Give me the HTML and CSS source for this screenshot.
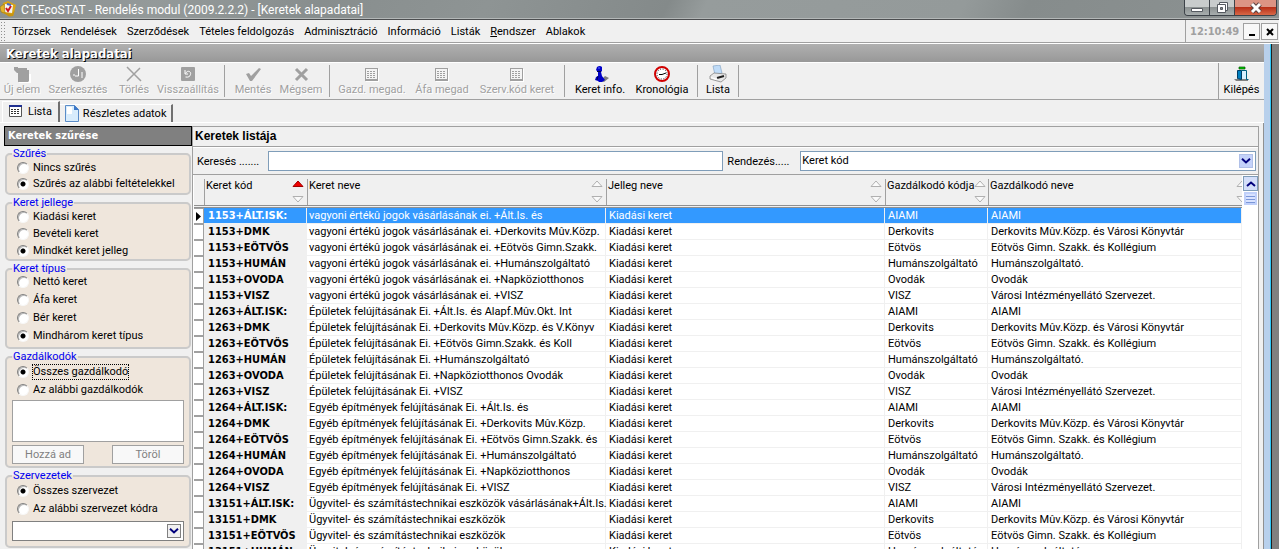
FILE: index.html
```html
<!DOCTYPE html>
<html lang="hu">
<head>
<meta charset="utf-8">
<title>CT-EcoSTAT - Rendelés modul</title>
<link rel="stylesheet" href="styles.css">
</head>
<body>
<svg class="defs" aria-hidden="true">
  <symbol id="up" viewBox="0 0 12 7"><path d="M1 6.500 6 1l5 5.500z"/></symbol>
  <symbol id="down" viewBox="0 0 12 7"><path d="M1 .5h10L6 6z"/></symbol>
  <symbol id="sheet" viewBox="0 0 16 16"><path fill="#fff" d="M2 3h13v13H2z"/><path fill="#a0a0a0" d="M1 2h13v13H1z"/><path fill="#f4f4f4" d="M2 3h11v10H2z"/><path stroke="#a0a0a0" stroke-dasharray="2 1" d="M3 5.500h9M3 7.500h9M3 9.500h9M3 11.500h9"/></symbol>
  <symbol id="chev" viewBox="0 0 10 6"><path fill="none" stroke="#00007c" stroke-width="2" d="M1 .8 5 4.500 9 .8"/></symbol>
</svg>

<header class="titlebar">
  <svg class="app-icon" width="17" height="17" viewBox="0 0 17 17"><path fill="#d9a514" d="M3 3 8 1l8 4-3 11-11-3z"/><path fill="#f6f6f0" d="m5 4 8 1-1 8-8-1z"/><path fill="#e5b52b" stroke="#8a6a10" stroke-width=".5" d="m0 7 4-3 1 9-4-1z"/><path fill="#c89410" d="m2 12 10 2 3-4-2 6-4 .5z"/><path fill="none" stroke="#cc1420" stroke-width="2" d="m6 8 2 3 3-5"/><path stroke="#4866c8" stroke-width="2" d="m7 4 4 1"/></svg>
  <h1>CT-EcoSTAT - Rendelés modul (2009.2.2.2) - [Keretek alapadatai]</h1>
  <div class="win-buttons">
    <button class="win-btn" aria-label="Kis méret"><svg width="14" height="10" viewBox="0 0 14 10"><path fill="#fff" stroke="#555a60" d="M1.500 5.500h11v3h-11z"/></svg></button>
    <button class="win-btn" aria-label="Előző méret"><svg width="13" height="12" viewBox="0 0 13 12"><path fill="#fff" stroke="#555a60" d="M3.500.5h8v8h-8z"/><path fill="#fff" stroke="#555a60" d="M1.500 2.500h8v8h-8z"/><path fill="#888" stroke="#555a60" d="M4.500 5.500h2v2h-2z"/></svg></button>
    <button class="win-btn win-close" aria-label="Bezárás"><svg width="12" height="12" viewBox="0 0 12 12"><path stroke="#5a4040" stroke-width="5" d="m2 2 8 8M10 2l-8 8"/><path stroke="#fff" stroke-width="3" d="m2 2 8 8M10 2l-8 8"/></svg></button>
  </div>
</header>

<nav class="menubar">
  <span class="grip"></span>
  <div class="menu-items">
    <button>Törzsek</button><button>Rendelések</button><button>Szerződések</button><button>Tételes feldolgozás</button><button>Adminisztráció</button><button>Információ</button><button>Listák</button><button><u>R</u>endszer</button><button>Ablakok</button>
  </div>
  <time class="clock">12:10:49</time>
  <button class="mdi" aria-label="Kis méret"><svg width="10" height="10" viewBox="0 0 10 10"><path d="M2 7h6v2H2z"/></svg></button>
  <button class="mdi" aria-label="Bezárás"><svg width="10" height="10" viewBox="0 0 10 10"><path stroke="#000" stroke-width="2" d="m2 2 6 6M8 2 2 8"/></svg></button>
</nav>

<div class="workspace">
<div class="window">
  <h2 class="caption">Keretek alapadatai</h2>

  <div class="toolbar">
    <button class="w-s" disabled><svg width="18" height="18" viewBox="0 0 18 18"><path fill="#fff" d="M5 9h13v9H6z"/><path fill="#a0a0a0" d="M1 2h4v1h9v2h2v11l-1 1H5V8H4L1 5z"/></svg>Új elem</button>
    <button class="w-l" disabled><svg width="18" height="18" viewBox="0 0 18 18"><circle cx="9" cy="9" r="8" fill="#a0a0a0"/><path fill="none" stroke="#fff" d="M9.500 4v7H6M13 7v4M4 10h2M12 12h2"/></svg>Szerkesztés</button>
    <button class="w-s" disabled><svg width="18" height="18" viewBox="0 0 18 18"><path fill="none" stroke="#a0a0a0" stroke-width="1.500" d="m2 2 14 14M15 3 2 16"/></svg>Törlés</button>
    <button class="w-m" disabled><svg width="18" height="18" viewBox="0 0 18 18"><rect x="2" y="2" width="14" height="14" rx="1" fill="#a0a0a0"/><path fill="none" stroke="#fff" d="M6 5v4h3M6.500 8.500c2-4 6-2 5 1-.5 2-2 3-5 2.500"/></svg>Visszaállítás</button>
    <span class="sep"></span>
    <button class="w-n" disabled><svg width="18" height="18" viewBox="0 0 18 18"><path fill="#a0a0a0" d="m2 9 3-1 2 3 8-8 2 1-9 12H6z"/></svg>Mentés</button>
    <button class="w-n" disabled><svg width="18" height="18" viewBox="0 0 18 18"><path fill="none" stroke="#a0a0a0" stroke-width="3" d="m4 4 11 11M15 4 4 15"/></svg>Mégsem</button>
    <span class="sep"></span>
    <button class="w-xl" disabled><svg width="16" height="18" viewBox="0 0 16 18"><use href="#sheet" width="16" height="16" y="1"/></svg>Gazd. megad.</button>
    <button class="w-m" disabled><svg width="16" height="18" viewBox="0 0 16 18"><use href="#sheet" width="16" height="16" y="1"/></svg>Áfa megad</button>
    <button class="w-xxl" disabled><svg width="16" height="18" viewBox="0 0 16 18"><use href="#sheet" width="16" height="16" y="1"/></svg>Szerv.kód keret</button>
    <span class="sep"></span>
    <button class="w-i"><svg width="18" height="18" viewBox="0 0 18 18"><path fill="#808080" d="m9 16 5-5 4 2-5 4z"/><path fill="#0000c8" d="M6 2q3-2 5 0v4l-1 1 1 4 3 4-3 2H8l-1-1-3-1 1-3 2-1V7L5 5z"/><path stroke="#000050" d="M6 6.500h4M7 11l-1 4"/><path stroke="#5a6cff" d="M8 2v2"/></svg>Keret info.</button>
    <button class="w-i"><svg width="18" height="18" viewBox="0 0 18 18"><circle cx="9" cy="9" r="7" fill="#fff" stroke="#d00000" stroke-width="2"/><circle cx="9" cy="9" r="5" fill="none" stroke="#223" stroke-dasharray="1 1.620"/><path fill="none" stroke="#000" d="m13 8-4 1.500L6 9.500"/></svg>Kronológia</button>
    <span class="sep"></span>
    <button class="w-xs"><svg width="18" height="18" viewBox="0 0 18 18"><path fill="#c0dcf8" stroke="#7a9cc0" stroke-width=".6" d="m4 1 7-1 2 8-7 2z"/><path fill="#e8e8e8" stroke="#777" stroke-width=".7" d="m1 11 4-3 12 1v4l-5 4-11-3z"/><path stroke="#222" stroke-width="2" d="m8 13 7-2"/><path fill="#fff" d="m2 12 7 2-2 1-5-2z"/></svg>Lista</button>
    <span class="sep"></span>
    <span class="spacer"></span>
    <span class="sep tall"></span>
    <button class="w-n exit"><svg width="18" height="18" viewBox="0 0 18 18"><path fill="#00d000" stroke="#005000" stroke-width=".7" d="M6 2h6v2H6z"/><path fill="#808080" d="M1 14h14v2H3z"/><path fill="#d8f0ff" d="M9 6h5v8H9z"/><path fill="#0080c0" stroke="#003c64" d="M4.500 5.500h4v9l-4-1z"/><path fill="none" stroke="#006080" d="M8.500 5.500h5v9h2"/></svg>Kilépés</button>
  </div>

  <div class="tabs">
    <button class="tab active"><svg width="14" height="14" viewBox="0 0 14 14"><path fill="#fff" stroke="#555" d="M.5.5h12v11H.5z"/><path fill="#203090" d="M0 0h13v2H0z"/><path stroke="#333" stroke-dasharray="2 1" d="M2 4.500h9M2 6.500h9M2 8.500h9"/></svg>Lista</button>
    <button class="tab"><svg width="14" height="17" viewBox="0 0 14 17"><path fill="#d8ecfc" stroke="#5a8cc8" d="M.5.5h9l4 4v12H.5z"/><path fill="#3c78c8" d="M9 0v5h5z"/><path fill="#fff" d="M2 2h5v7H2z"/></svg>Részletes adatok</button>
  </div>

  <main class="page">
    <aside class="filters">
      <h3>Keretek szűrése</h3>
      <fieldset class="rows-16"><legend>Szűrés</legend>
        <label><input type="radio" name="f">Nincs szűrés</label>
        <label><input type="radio" name="f" checked>Szűrés az alábbi feltételekkel</label>
      </fieldset>
      <fieldset class="rows-17"><legend>Keret jellege</legend>
        <label><input type="radio" name="j">Kiadási keret</label>
        <label><input type="radio" name="j">Bevételi keret</label>
        <label><input type="radio" name="j" checked>Mindkét keret jelleg</label>
      </fieldset>
      <fieldset class="kinds"><legend>Keret típus</legend>
        <label><input type="radio" name="t">Nettó keret</label>
        <label><input type="radio" name="t">Áfa keret</label>
        <label><input type="radio" name="t">Bér keret</label>
        <label><input type="radio" name="t" checked>Mindhárom keret típus</label>
      </fieldset>
      <fieldset class="managers"><legend>Gazdálkodók</legend>
        <label><input type="radio" name="g" checked><span class="focused">Összes gazdálkodó</span></label>
        <label><input type="radio" name="g">Az alábbi gazdálkodók</label>
        <select class="listbox" size="2" aria-label="Gazdálkodók"></select>
        <div class="pair"><button disabled>Hozzá ad</button><button disabled>Töröl</button></div>
      </fieldset>
      <fieldset class="orgs"><legend>Szervezetek</legend>
        <label><input type="radio" name="s" checked>Összes szervezet</label>
        <label><input type="radio" name="s">Az alábbi szervezet kódra</label>
        <div class="combo flat"><select aria-label="Szervezet"><option></option></select><span class="drop"><svg width="10" height="6"><use href="#chev"/></svg></span></div>
      </fieldset>
    </aside>

    <section class="list">
      <h3>Keretek listája</h3>
      <div class="search">
        <label for="q">Keresés .......</label><input id="q" type="text">
        <label for="o" class="order">Rendezés.....</label>
        <div class="combo"><select id="o"><option>Keret kód</option></select><span class="drop"><svg width="10" height="6"><use href="#chev"/></svg></span></div>
      </div>
      <div class="grid">
        <table>
          <colgroup><col class="c0"><col class="c1"><col class="c2"><col class="c3"><col class="c4"><col></colgroup>
          <thead><tr><th></th>
            <th><div class="th">Keret kód<span class="sort asc"><svg width="12" height="7"><use href="#up"/></svg><svg width="12" height="7"><use href="#down"/></svg></span></div></th>
            <th><div class="th">Keret neve<span class="sort"><svg width="12" height="7"><use href="#up"/></svg><svg width="12" height="7"><use href="#down"/></svg></span></div></th>
            <th><div class="th">Jelleg neve<span class="sort"><svg width="12" height="7"><use href="#up"/></svg><svg width="12" height="7"><use href="#down"/></svg></span></div></th>
            <th><div class="th">Gazdálkodó kódja<span class="sort"><svg width="12" height="7"><use href="#up"/></svg><svg width="12" height="7"><use href="#down"/></svg></span></div></th>
            <th><div class="th last">Gazdálkodó neve<span class="sort"><svg width="12" height="7"><use href="#up"/></svg><svg width="12" height="7"><use href="#down"/></svg></span></div></th>
          </tr></thead>
          <tbody>
<tr class="sel"><td><svg width="5" height="9" viewBox="0 0 5 9"><path d="M0 0v9l5-4.500z"/></svg></td><td>1153+ÁLT.ISK:</td><td>vagyoni értékû jogok vásárlásának ei. +Ált.Is. és</td><td>Kiadási keret</td><td>AIAMI</td><td>AIAMI</td></tr>
<tr><td></td><td>1153+DMK</td><td>vagyoni értékû jogok vásárlásának ei. +Derkovits Mûv.Közp.</td><td>Kiadási keret</td><td>Derkovits</td><td>Derkovits Mûv.Közp. és Városi Könyvtár</td></tr>
<tr><td></td><td>1153+EÖTVÖS</td><td>vagyoni értékû jogok vásárlásának ei. +Eötvös Gimn.Szakk.</td><td>Kiadási keret</td><td>Eötvös</td><td>Eötvös Gimn. Szakk. és Kollégium</td></tr>
<tr><td></td><td>1153+HUMÁN</td><td>vagyoni értékû jogok vásárlásának ei. +Humánszolgáltató</td><td>Kiadási keret</td><td>Humánszolgáltató</td><td>Humánszolgáltató.</td></tr>
<tr><td></td><td>1153+OVODA</td><td>vagyoni értékû jogok vásárlásának ei. +Napköziotthonos</td><td>Kiadási keret</td><td>Ovodák</td><td>Ovodák</td></tr>
<tr><td></td><td>1153+VISZ</td><td>vagyoni értékû jogok vásárlásának ei. +VISZ</td><td>Kiadási keret</td><td>VISZ</td><td>Városi Intézményellátó Szervezet.</td></tr>
<tr><td></td><td>1263+ÁLT.ISK:</td><td>Épületek felújításának Ei. +Ált.Is. és Alapf.Mûv.Okt. Int</td><td>Kiadási keret</td><td>AIAMI</td><td>AIAMI</td></tr>
<tr><td></td><td>1263+DMK</td><td>Épületek felújításának Ei. +Derkovits Mûv.Közp. és V.Könyv</td><td>Kiadási keret</td><td>Derkovits</td><td>Derkovits Mûv.Közp. és Városi Könyvtár</td></tr>
<tr><td></td><td>1263+EÖTVÖS</td><td>Épületek felújításának Ei. +Eötvös Gimn.Szakk. és Koll</td><td>Kiadási keret</td><td>Eötvös</td><td>Eötvös Gimn. Szakk. és Kollégium</td></tr>
<tr><td></td><td>1263+HUMÁN</td><td>Épületek felújításának Ei. +Humánszolgáltató</td><td>Kiadási keret</td><td>Humánszolgáltató</td><td>Humánszolgáltató.</td></tr>
<tr><td></td><td>1263+OVODA</td><td>Épületek felújításának Ei. +Napköziotthonos Ovodák</td><td>Kiadási keret</td><td>Ovodák</td><td>Ovodák</td></tr>
<tr><td></td><td>1263+VISZ</td><td>Épületek felújításának Ei. +VISZ</td><td>Kiadási keret</td><td>VISZ</td><td>Városi Intézményellátó Szervezet.</td></tr>
<tr><td></td><td>1264+ÁLT.ISK:</td><td>Egyéb építmények felújításának Ei. +Ált.Is. és</td><td>Kiadási keret</td><td>AIAMI</td><td>AIAMI</td></tr>
<tr><td></td><td>1264+DMK</td><td>Egyéb építmények felújításának Ei. +Derkovits Mûv.Közp.</td><td>Kiadási keret</td><td>Derkovits</td><td>Derkovits Mûv.Közp. és Városi Könyvtár</td></tr>
<tr><td></td><td>1264+EÖTVÖS</td><td>Egyéb építmények felújításának Ei. +Eötvös Gimn.Szakk. és</td><td>Kiadási keret</td><td>Eötvös</td><td>Eötvös Gimn. Szakk. és Kollégium</td></tr>
<tr><td></td><td>1264+HUMÁN</td><td>Egyéb építmények felújításának Ei. +Humánszolgáltató</td><td>Kiadási keret</td><td>Humánszolgáltató</td><td>Humánszolgáltató.</td></tr>
<tr><td></td><td>1264+OVODA</td><td>Egyéb építmények felújításának Ei. +Napköziotthonos</td><td>Kiadási keret</td><td>Ovodák</td><td>Ovodák</td></tr>
<tr><td></td><td>1264+VISZ</td><td>Egyéb építmények felújításának Ei. +VISZ</td><td>Kiadási keret</td><td>VISZ</td><td>Városi Intézményellátó Szervezet.</td></tr>
<tr><td></td><td>13151+ÁLT.ISK:</td><td>Ügyvitel- és számítástechnikai eszközök vásárlásának+Ált.Is.</td><td>Kiadási keret</td><td>AIAMI</td><td>AIAMI</td></tr>
<tr><td></td><td>13151+DMK</td><td>Ügyvitel- és számítástechnikai eszközök</td><td>Kiadási keret</td><td>Derkovits</td><td>Derkovits Mûv.Közp. és Városi Könyvtár</td></tr>
<tr><td></td><td>13151+EÖTVÖS</td><td>Ügyvitel- és számítástechnikai eszközök</td><td>Kiadási keret</td><td>Eötvös</td><td>Eötvös Gimn. Szakk. és Kollégium</td></tr>
<tr><td></td><td>13151+HUMÁN</td><td>Ügyvitel- és számítástechnikai eszközök</td><td>Kiadási keret</td><td>Humánszolgáltató</td><td>Humánszolgáltató.</td></tr>
          </tbody>
        </table>
        <div class="scroll"><button aria-label="Fel"><svg width="10" height="6" viewBox="0 0 10 6"><path fill="none" stroke="#00007c" stroke-width="2" d="M1 5 5 1.500 9 5"/></svg></button><span class="thumb"></span></div>
      </div>
    </section>
  </main>
</div>
<div class="frame"></div>
</div>
</body>
</html>
```

FILE: styles.css
```css
* { box-sizing: border-box; }
html, body { height: 100%; }
body {
  margin: 0;
  display: flex;
  flex-direction: column;
  overflow: hidden;
  background: #f0f0f0;
  color: #000;
  font: 11px/14px Roboto, "Liberation Sans", sans-serif;
}
button, input, select { font: inherit; color: inherit; margin: 0; padding: 0; border-radius: 0; }
button { border: 0; background: none; white-space: nowrap; }
h1, h2, h3 { margin: 0; }
svg { display: block; flex: none; }
.defs { position: absolute; width: 0; height: 0; }

.titlebar {
  display: flex;
  flex: none;
  height: 20px;
  gap: 4px;
  border-bottom: 1px solid #4c4e50;
  box-shadow: inset 0 -1px #b4b8b8;
  background: linear-gradient(115deg, #8a9090 0%, #949a9a 12%, #888e8e 25%, #8e9494 38%, #848a8a 52%, #969c9c 55%, #949a9a 75%, #868c8c 80%, #8c9292 100%);
}
.titlebar h1 { flex: 1; color: #fff; font: 12px/20px Roboto, sans-serif; }
.win-buttons { display: flex; height: 16px; margin-right: 2px; border: 1px solid #3c4248; border-top: 0; border-radius: 0 0 4px 4px; overflow: hidden; }
.win-btn { width: 25px; display: grid; place-items: center; border-right: 1px solid #3c4248; background: linear-gradient(#c8cccc 0 45%, #8c9292 50%, #a8aeae); }
.win-close { width: 41px; border-right: 0; background: linear-gradient(#dc9484 0 45%, #b83018 50%, #d86848); }

.menubar { display: flex; flex: none; align-items: center; height: 24px; border-bottom: 1px solid #fff; background: #f0f0f0; box-shadow: inset 0 -1px #a0a0a0; }
.grip { width: 6px; height: 22px; margin-right: 6px; background: radial-gradient(circle, #909090 1px, transparent 1px) 0 0 / 3px 3px; }
.menu-items { display: flex; flex: 1; gap: 10px; padding-top: 1px; }
.clock { align-self: stretch; width: 58px; padding-left: 4px; border-left: 1px solid #a0a0a0; color: #a0a0a0; font: bold 11px/23px "DejaVu Sans Condensed", sans-serif; }
.mdi { display: grid; place-items: center; width: 17px; height: 17px; margin-right: 1px; border: 1px solid #a0a0a0; background: #f8f8f8; }

.workspace { display: flex; flex: 1; min-height: 0; }
.window { display: flex; flex: 1; flex-direction: column; min-width: 0; }
.frame { width: 15px; background: linear-gradient(90deg, #b8d0ec 0 6px, #30c8f8 6px 7px, #202020 7px 8px, #808080 8px); }

.caption { height: 18px; flex: none; padding-left: 6px; background: linear-gradient(#b0b0b0, #989898); color: #fff; font: bold 13px/19px "DejaVu Sans Condensed", sans-serif; text-shadow: 1px 1px #000; }

.toolbar { display: flex; flex: none; height: 38px; border-top: 1px solid #fff; border-bottom: 1px solid #a0a0a0; }
.toolbar button { display: flex; flex: none; flex-direction: column; align-items: center; padding-top: 2px; }
.toolbar button:disabled { color: #a0a0a0; text-shadow: 1px 1px #fff; }
.w-xs { width: 32px; }
.w-s { width: 44px; }
.w-n { width: 48px; }
.w-i { width: 62px; }
.w-m { width: 64px; }
.w-l { width: 68px; }
.w-xl { width: 76px; }
.w-xxl { width: 86px; }
.sep { width: 1px; margin: 2px 4px; background: #a0a0a0; }
.sep.tall { margin: 0; }
.toolbar .exit { width: 45px; }
.spacer { flex: 1; }

.tabs { display: flex; flex: none; align-items: flex-end; height: 23px; padding-left: 2px; border-bottom: 1px solid #fff; }
.tab { display: flex; align-items: center; gap: 4px; height: 18px; padding: 0 5px; border-top: 1px solid #fff; border-right: 2px solid #707070; }
.tab.active { height: 21px; gap: 5px; padding: 0 6px; border-left: 1px solid #fff; }

.page { display: flex; flex: 1; min-height: 0; margin-left: 2px; padding: 3px 4px 0 2px; border-right: 1px solid #909090; }
.filters { flex: none; width: 188px; display: flex; flex-direction: column; gap: 4px; }
.filters h3 { height: 20px; padding-left: 3px; border: 1px solid #000; background: #808080; color: #fff; font: bold 11px/18px "DejaVu Sans Condensed", sans-serif; }
fieldset { flex: none; margin: 0 1px; padding: 0 5px; min-width: 0; border: 2px solid #cacaca; border-radius: 5px; background: #efe6dc; }
legend { margin-left: 0; padding: 0 1px; color: #0000f0; line-height: 8px; }
fieldset label { display: flex; align-items: center; gap: 4px; height: 18px; padding-left: 5px; }
.rows-16 { padding-top: 2px; padding-bottom: 1px; }
.rows-16 label { height: 16px; }
.rows-17 { padding-top: 1px; }
.rows-17 label { height: 17px; }
.kinds { padding-bottom: 2px; }
.managers { padding-top: 2px; padding-bottom: 2px; }
.orgs { padding-top: 2px; padding-bottom: 5px; }
input[type="radio"] { appearance: none; flex: none; width: 12px; height: 12px; border: 1px solid; border-color: #808080 #f8f8f8 #f8f8f8 #808080; border-radius: 50%; background: #fff; box-shadow: inset 1px 1px #b8b8b8; }
input[type="radio"]:checked { background: radial-gradient(circle, #000 2px, #fff 3px); }
.focused { outline: 1px dotted #000; }
.listbox { display: block; width: 172px; height: 42px; margin-top: 1px; border: 1px solid #a0a0a0; background: #fff; }
.pair { display: flex; justify-content: space-between; width: 172px; margin-top: 3px; }
.pair button { width: 72px; height: 19px; border: 1px solid #a0a0a0; background: #f8f8f8; color: #808080; }

.combo { position: relative; display: flex; flex: 1; height: 20px; border: 1px solid #7f9db9; background: #fff; }
.combo select { appearance: none; flex: 1; padding: 0 1px; border: 0; background: #fff; }
.drop { position: absolute; top: 2px; right: 2px; bottom: 2px; width: 14px; display: grid; place-items: center; border: 1px solid #b0c0e8; background: #c4d2fa; pointer-events: none; }
.flat { width: 172px; margin-top: 3px; border-color: #808080; }
.flat .drop { border-color: #808080; background: #f0f0f0; }

.list { display: flex; flex: 1; flex-direction: column; min-width: 0; border: 1px solid #a0a0a0; border-bottom: 0; }
.list h3 { flex: none; height: 19px; padding-left: 2px; font: bold 12px/18px "Liberation Sans", sans-serif; }
.search { display: flex; flex: none; align-items: center; height: 29px; padding: 0 2px 0 4px; border: solid #a0a0a0; border-width: 1px 0; box-shadow: inset 0 1px #fff; }
.search label { width: 71px; padding-top: 3px; }
.search .order { width: 73px; }
.search input { flex: 0 0 43%; width: 0; height: 20px; margin-right: 4px; padding: 0 2px; border: 1px solid #7f9db9; background: #fff; }
.search select { line-height: 16px; }

.grid { display: flex; flex: 1; min-height: 0; padding-left: 1px; background: #fff; }
table { flex: 1; width: 0; border-collapse: separate; border-spacing: 0; table-layout: fixed; }
.c0 { width: 10px; }
.c1 { width: 103px; }
.c2 { width: 299px; }
.c3 { width: 279px; }
.c4 { width: 103px; }
th { height: 33px; padding: 4px 0 0; border-bottom: 3px double #909090; background: #f0f0f0; font-weight: normal; text-align: left; vertical-align: top; }
.th { display: flex; justify-content: space-between; height: 26px; padding: 0 3px 0 1px; border-left: 1px solid #a0a0a0; white-space: nowrap; }
.th.last { padding-right: 0; overflow: hidden; }
.sort { display: flex; flex-direction: column; gap: 9px; padding-top: 1px; }
.last .sort { margin-right: -6px; }
.sort svg { fill: #fafafa; stroke: #b0b0b0; stroke-width: 1; }
.sort.asc svg:first-child { fill: #f00000; stroke: #a00000; }
td { height: 16px; padding: 0 0 0 3px; border: solid #f0f0f0; border-width: 0 1px 1px 0; line-height: 15px; white-space: nowrap; }
td:nth-child(1) { padding-left: 2px; border: solid #a0a0a0; border-width: 1px 1px 1px 0; }
td:nth-child(2) { padding-left: 4px; background: #f0f0f0; font: bold 11px/15px "DejaVu Sans Condensed", sans-serif; }
td:nth-child(3) { padding-left: 2px; }
.sel td:nth-child(n+2) { background: #3399ff; color: #fff; }
.scroll { display: flex; flex: none; flex-direction: column; width: 16px; padding: 1px 0 0 1px; background: #fff; }
.scroll button { display: grid; place-items: center; height: 15px; border: 1px solid #7f9db9; background: #d4dffa; }
.thumb { height: 13px; margin: 1px; border: 2px solid #c0d0fa; background: repeating-linear-gradient(#d8e2ff 0 2px, #7a96d8 2px 3px); }
```
